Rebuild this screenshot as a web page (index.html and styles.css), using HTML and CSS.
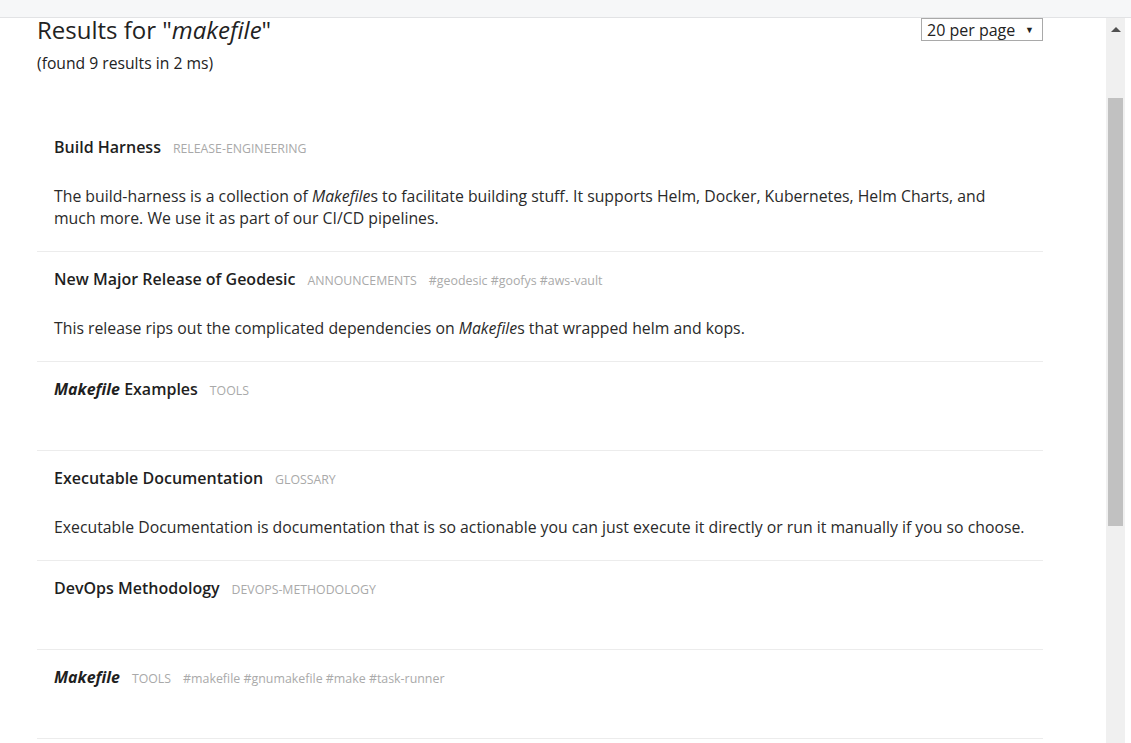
FILE: index.html
```html
<!DOCTYPE html>
<html lang="en">
<head>
<meta charset="utf-8">
<title>Search results for makefile</title>
<link rel="stylesheet" href="styles.css">
</head>
<body>
<header class="topbar">
  <div class="topbar-inner">
    <div class="crumbs">
      <span class="chev">›</span>
      <span class="crumb">Search</span>
    </div>
    <div class="query">
      <span class="chev">‹</span>
      <span class="crumb">makefile</span>
    </div>
  </div>
</header>
<div class="frame">
  <main class="content">
    <div class="results-head">
      <div class="heading">
        <h1 class="title">Results for "<em>makefile</em>"</h1>
        <p class="found">(found 9 results in 2 ms)</p>
      </div>
      <div class="select">
        <span class="select-label">20 per page</span>
        <span class="select-arrow">▼</span>
      </div>
    </div>
    <ul class="results">
      <li class="result">
        <div class="result-head">
          <span class="result-title">Build Harness</span>
          <span class="category">RELEASE-ENGINEERING</span>
        </div>
        <p class="desc">The build-harness is a collection of <em>Makefile</em>s to facilitate building stuff. It supports Helm, Docker, Kubernetes, Helm Charts, and much more. We use it as part of our CI/CD pipelines.</p>
      </li>
      <li class="result">
        <div class="result-head">
          <span class="result-title">New Major Release of Geodesic</span>
          <span class="category">ANNOUNCEMENTS</span>
          <span class="tags">#geodesic #goofys #aws-vault</span>
        </div>
        <p class="desc">This release rips out the complicated dependencies on <em>Makefile</em>s that wrapped helm and kops.</p>
      </li>
      <li class="result">
        <div class="result-head">
          <span class="result-title"><em>Makefile</em> Examples</span>
          <span class="category">TOOLS</span>
        </div>
        <p class="desc empty"></p>
      </li>
      <li class="result">
        <div class="result-head">
          <span class="result-title">Executable Documentation</span>
          <span class="category">GLOSSARY</span>
        </div>
        <p class="desc">Executable Documentation is documentation that is so actionable you can just execute it directly or run it manually if you so choose.</p>
      </li>
      <li class="result">
        <div class="result-head">
          <span class="result-title">DevOps Methodology</span>
          <span class="category">DEVOPS-METHODOLOGY</span>
        </div>
        <p class="desc empty"></p>
      </li>
      <li class="result">
        <div class="result-head">
          <span class="result-title"><em>Makefile</em></span>
          <span class="category">TOOLS</span>
          <span class="tags">#makefile #gnumakefile #make #task-runner</span>
        </div>
        <p class="desc empty"></p>
      </li>
    </ul>
  </main>
  <div class="scrollbar">
    <div class="scroll-up"></div>
    <div class="scroll-thumb"></div>
  </div>
</div>
</body>
</html>
```
FILE: styles.css
```css
* { box-sizing: border-box; }

html, body {
  margin: 0;
  padding: 0;
  height: 100%;
  overflow: hidden;
  background: #fff;
}

body {
  font-family: "Open Sans", "Noto Sans", sans-serif;
  color: #222;
}

.topbar {
  height: 18px;
  background: #f6f7f8;
  border-bottom: 1px solid #e2e3e5;
  overflow: hidden;
}

.topbar-inner {
  width: 1043px;
  display: flex;
  justify-content: space-between;
  margin-top: -15px;
  line-height: 20px;
  font-size: 14px;
  color: #666;
}

.crumbs { display: flex; gap: 14px; padding-left: 18px; }
.query { display: flex; gap: 12px; }
.chev { color: #bbb; }

.frame {
  display: flex;
  height: calc(100% - 18px);
}

.content {
  width: 1106px;
  flex: none;
  padding-left: 37px;
  padding-right: 63px;
}

.scrollbar {
  width: 19px;
  flex: none;
  background: #f0f0f0;
  display: flex;
  flex-direction: column;
  align-items: center;
}

.scroll-up {
  margin-top: 9px;
  width: 0;
  height: 0;
  border-left: 5px solid transparent;
  border-right: 5px solid transparent;
  border-bottom: 5px solid #505050;
}

.scroll-thumb {
  margin-top: 66px;
  width: 15px;
  height: 428px;
  background: #c1c1c1;
}

.results-head {
  display: flex;
  justify-content: space-between;
  align-items: flex-start;
}

.title {
  margin: 0;
  font-size: 24px;
  line-height: 24px;
  font-weight: 400;
  color: #222;
}

.title em { font-style: italic; }

.found {
  margin: 10px 0 0;
  font-size: 15.7px;
  line-height: 22px;
  color: #222;
}

.select {
  width: 122px;
  height: 23px;
  border: 1px solid #a9a9a9;
  display: flex;
  align-items: center;
  justify-content: space-between;
  padding: 0 8px 0 5px;
  font-size: 16px;
  color: #222;
  background: #fff;
}

.select-label { line-height: 20px; }
.select-arrow { font-size: 9px; color: #222; }

.results {
  list-style: none;
  margin: 46px 0 0;
  padding: 0;
}

.result {
  padding: 16px 17px 22px;
  border-bottom: 1px solid #ececec;
}

.result-head {
  display: flex;
  align-items: baseline;
  height: 22px;
}

.result-title {
  font-size: 16px;
  line-height: 22px;
  font-weight: 600;
  color: #1f1f1f;
  margin-right: 12px;
}

.result-title em {
  font-style: italic;
  font-weight: 700;
}

.category {
  font-size: 12.3px;
  line-height: 16px;
  color: #a9a9a9;
  margin-right: 12px;
}

.tags {
  font-size: 12.4px;
  line-height: 16px;
  color: #aaa;
}

.desc {
  margin: 27px 0 0;
  font-size: 15.8px;
  line-height: 22px;
  color: #2a2a2a;
}

.desc.empty {
  margin-top: 28px;
  height: 0;
}
```
